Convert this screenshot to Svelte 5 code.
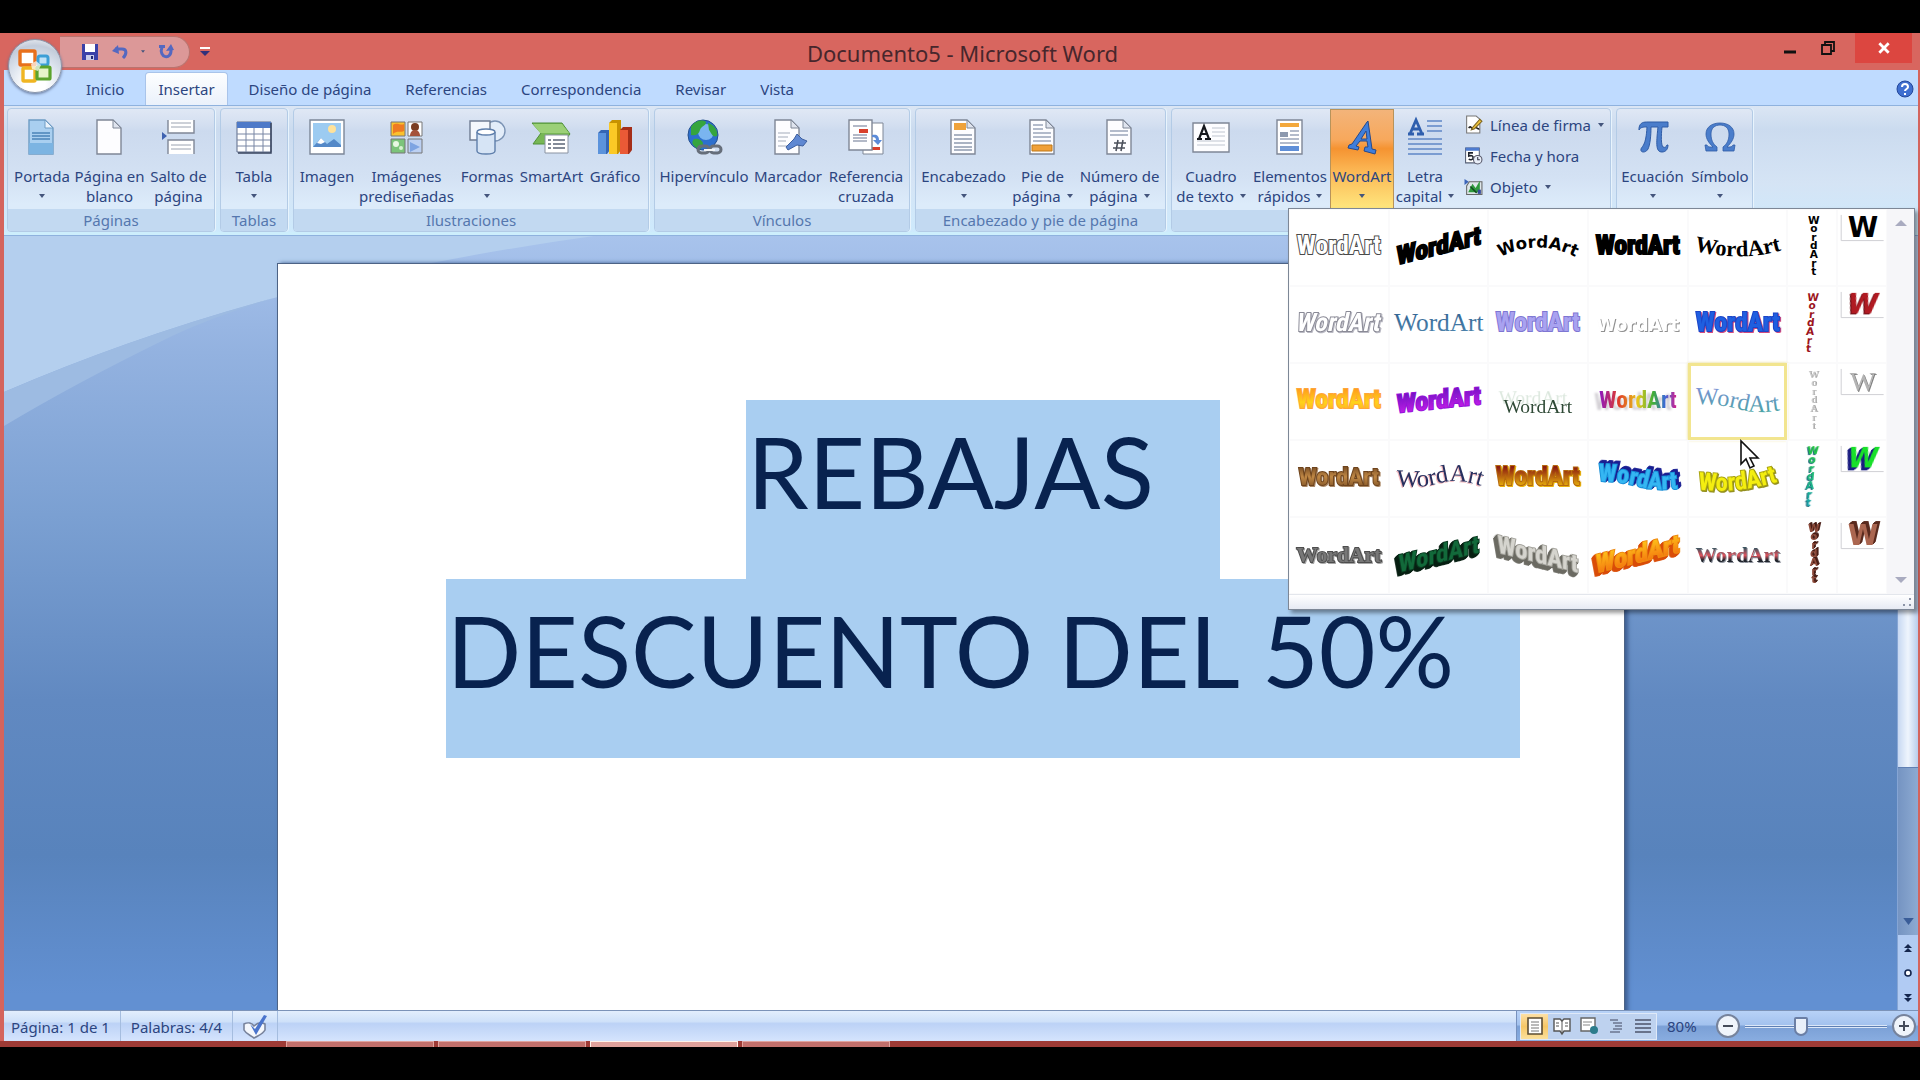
<script lang="ts">
  type Tool = { label: string[]; icon: string; w: number; menu?: boolean; active?: boolean };
  type Group = { name: string; tools: Tool[]; small?: { label: string; icon: string; menu?: boolean }[] };
  type Art = {
    font: 'impact' | 'wide' | 'serif' | 'serifbold';
    size: number;
    fill: string;
    stroke?: string;
    path?: string;
    transform?: string;
    filter?: string;
    y?: number;
  };

  const tabs = ['Inicio', 'Insertar', 'Diseño de página', 'Referencias', 'Correspondencia', 'Revisar', 'Vista'];
  let activeTab = $state('Insertar');
  let zoom = $state(38);
  let hovered = $state(14);

  const sheet = '<path d="M5 1h16l8 8v26H5z" fill="#fdfdff" stroke="#7f8796" stroke-width="1.4"/><path d="M21 1v8h8z" fill="#dfe4ee" stroke="#7f8796"/>';

  const icons: Record<string, string> = {
    portada: '<path d="M5 1h16l8 8v26H5z" fill="#a9cff0" stroke="#6e9cc4" stroke-width="1.4"/><path d="M21 1v8h8z" fill="#e9f3fc" stroke="#6e9cc4"/><path d="M8 14h18M8 17h18M8 20h18" stroke="#4a84b8" stroke-width="1.6"/><path d="M5 24h24v11H5z" fill="#7cb4e2"/>',
    blanco: sheet,
    salto: '<path d="M7 1h26v13H7zM7 21h26v14H7z" fill="#fff"/><path d="M7 1v13h26V1M7 35V21h26v14" fill="none" stroke="#7f8796" stroke-width="1.4"/><path d="M10 4h20M10 8h20M10 26h20M10 30h20" stroke="#9aa2b0"/><path d="M1 13l5 4-5 4z" fill="#3f62b0"/>',
    tabla: '<path d="M1 3h34v30H1z" fill="#fff" stroke="#5d6b88"/><path d="M1 3h34v6H1z" fill="#4e7ac8"/><path d="M1 15h34M1 21h34M1 27h34M10 9v24M18 9v24M27 9v24" stroke="#7886a4"/><path d="M35 4v30H2" fill="none" stroke="#39445e" stroke-width="1.5"/>',
    imagen: '<path d="M1 1h34v34H1z" fill="#fff" stroke="#7c8798" stroke-width="1.4"/><path d="M4 4h28v24H4z" fill="#9ccbf1"/><circle cx="23" cy="10" r="4" fill="#ffe29a"/><path d="M4 28l8-9 6 6 7-5 7 6v2z" fill="#5489c8"/><path d="M8 24l4-5 4 4-4 2z" fill="#fff"/>',
    clip: '<path d="M2 3h14v14H2z" fill="#fbc12d" stroke="#777"/><path d="M4 6c4-3 8 1 11-1v7c-4 2-7-1-11 3z" fill="#ef7a22"/><path d="M19 3h14v14H19z" fill="#fff" stroke="#777"/><circle cx="26" cy="8" r="4" fill="#7a3d22"/><path d="M21 17c0-8 10-8 10 0z" fill="#a5523a"/><path d="M2 20h14v14H2z" fill="#7cc47a" stroke="#777"/><circle cx="7" cy="25" r="3" fill="#e8f8e2"/><circle cx="12" cy="29" r="2" fill="#d7f2cf"/><path d="M19 20h14v14H19z" fill="#bcd0f2" stroke="#777"/><path d="M21 23l10 5-10 5z" fill="#7ea4e2"/>',
    formas: '<circle cx="26" cy="12" r="10" fill="#e3edf9" stroke="#7b93b4" stroke-width="1.4"/><path d="M1 2h20v19H1z" fill="#f4f7fc" stroke="#6f7c92" stroke-width="1.4"/><path d="M8 13v19c0 4 18 4 18 0V13" fill="#d6e4f5" stroke="#5f7fab" stroke-width="1.4"/><ellipse cx="17" cy="13" rx="9" ry="3" fill="#fff" stroke="#5f7fab" stroke-width="1.4"/>',
    smart: '<path d="M-2 4h30l8 11-8 10H-1l8-11z" fill="#77b755" stroke="#4f9038"/><path d="M-1 5h29l7 9H6z" fill="#9bd077"/><path d="M11 16h23v18H11z" fill="#fff" stroke="#8a93a2"/><path d="M14 21h3m2 0h12M14 25h3m2 0h12M14 29h3m2 0h12" stroke="#5b6677" stroke-width="1.6"/>',
    grafico: '<path d="M1 14l3-3h9v20l-3 4H1z" fill="#3566b4"/><path d="M1 14h8v21H1z" fill="#5b93dc"/><path d="M12 4l3-3h9v30l-3 4h-9z" fill="#c89200"/><path d="M12 4h8v31h-8z" fill="#fbc926"/><path d="M23 11l3-3h9v23l-3 4h-9z" fill="#a52e18"/><path d="M23 11h8v24h-8z" fill="#ea5a36"/>',
    hiper: '<circle cx="17" cy="16" r="15" fill="#2c6fce" stroke="#25508e"/><circle cx="20" cy="13" r="8" fill="#7ab5f0"/><path d="M5 8c5-8 13-7 15-5 0 4-5 4-6 8s-4 6-9 5zM22 4c7 2 10 8 9 13-5 2-6-4-8-6zM8 20c5-1 9 2 9 5s-2 5-4 5C8 28 4 24 8 20z" fill="#35a53e"/><rect x="12" y="27" width="11" height="7" rx="3.5" fill="none" stroke="#666e7a" stroke-width="3"/><rect x="24" y="27" width="11" height="7" rx="3.5" fill="none" stroke="#666e7a" stroke-width="3"/><path d="M18 31h11" stroke="#f2f4f7" stroke-width="2"/>',
    marcador: sheet + '<path d="M8 14h12M8 18h10M8 22h8M8 27h14" stroke="#a3abba"/><path d="M16 28l8-8 3-5 5 5 5 2-4 5-6-1-9 5z" fill="#5f88d2" stroke="#3d5f9f"/>',
    referencia: '<path d="M15 4h20v31H15z" fill="#fff" stroke="#7f8796"/><path d="M20 28h12v3H20z" fill="#d8402c"/><path d="M1 1h23v30H1z" fill="#fff" stroke="#7f8796" stroke-width="1.4"/><path d="M5 7h14M5 16h14M5 19h14M5 22h14" stroke="#9aa3b5" stroke-width="1.5"/><path d="M11 10h9v4h-9z" fill="#d8402c"/><path d="M24 16c5-1 7 1 7 5h3l-4 5-5-5h3c0-2-1-3-4-3z" fill="#5b8bd8"/>',
    encabezado: sheet + '<path d="M8 4h12v7H8z" fill="#efa23a"/><path d="M8 16h18M8 20h18M8 24h18M8 28h18M8 31h18" stroke="#8f9ab0" stroke-width="1.4"/>',
    pie: sheet + '<path d="M8 6h10M8 10h10M8 14h18M8 18h18M8 22h18" stroke="#9aa5ba" stroke-width="1.4"/><path d="M7 26h20v6H7z" fill="#f0a038" stroke="#bf7918"/>',
    numero: sheet + '<path d="M8 12h18M8 16h18" stroke="#9aa5ba" stroke-width="1.4"/><path d="M16 21l-2 11M21 21l-2 11M12 24h12M11 29h12" stroke="#4c515c" stroke-width="1.6"/>',
    cuadro: '<path d="M0 4h36v29H0z" fill="#fdfdff" stroke="#7f8796" stroke-width="1.4"/><path d="M19 9h13M19 13h13M19 17h13M4 22h28M4 26h28" stroke="#bfc5d0"/><path d="M4 20h5M12 20h6M6 20l5-13 5 13M8 15h6" fill="none" stroke="#16181d" stroke-width="2.2"/>',
    elementos: '<path d="M5 1h25v34H5z" fill="#fff" stroke="#7f8796" stroke-width="1.4"/><path d="M8 4h19v4H8z" fill="#f3a83c"/><path d="M18 12h9M18 16h9M8 20h19M8 24h19" stroke="#9aa5ba" stroke-width="1.4"/><path d="M8 13h8v5H8z" fill="#8d99ae"/><path d="M8 27h19v5H8z" fill="#5f8fd8"/>',
    wordart: '<path d="M24 2l4 28 4 1-1 4-11-3 1-4 3 0-1-6-7 0-4 5 3 1-1 3-10-2 1-3 3-1L23 3zM22 12l-5 8h6z" fill="#3f7edb" stroke="#27498a" fill-rule="evenodd"/>',
    letra: '<path d="M1 15h6M10 15h7M3 15L9 1l6 14M5 10h8" fill="none" stroke="#2f5fae" stroke-width="2.8"/><path d="M20 2h15M20 7h15M20 12h15M1 20h34M1 25h34M1 30h34M1 35h34" stroke="#5f86c6" stroke-width="1.5"/>',
    ecuacion: '<path d="M4 9c1-6 5-6 9-6h20v5h-6c-1 9-1 18 1 20 2 1 3 0 4-2h1c0 5-3 7-6 7-6 0-6-7-4-25h-7c0 9-1 18-3 22-2 4-8 4-7 0 1-3 5-3 6-22-4 0-6 0-8 3z" fill="#4a7dcb" stroke="#2f5ca6"/>',
    simbolo: '<path d="M4 32l-1-6h2c1 2 2 2 6 2C7 24 4 20 4 15 4 8 10 4 18 4s14 4 14 11c0 5-3 9-7 13 4 0 5 0 6-2h2l-1 6H21v-4c4-3 6-7 6-13 0-6-4-9-9-9s-9 3-9 9c0 6 2 10 6 13v4z" fill="#4a7dcb" stroke="#2f5ca6" stroke-width=".8"/>',
    firma: '<path d="M5 2h18l7 6v26H5z" fill="#fff" stroke="#777" stroke-width="2"/><path d="M9 25c4-8 6 6 10-1 3-5 5 4 10 2" fill="none" stroke="#222" stroke-width="3"/><path d="M16 24L30 8l4 4-14 14-6 2z" fill="#f0c23a" stroke="#7d6520" stroke-width="2"/>',
    fecha: '<path d="M3 4h26v28H3z" fill="#fff" stroke="#555f75" stroke-width="2"/><path d="M3 3h26v6H3z" fill="#4d7bd0"/><path d="M17 13h-8v6c6-2 9 0 8 4-1 3-5 4-8 2" fill="none" stroke="#1d222c" stroke-width="3"/><circle cx="26" cy="26" r="8" fill="#e8eef8" stroke="#556" stroke-width="2"/><path d="M26 21v5h4" fill="none" stroke="#334" stroke-width="2"/>',
    objeto: '<path d="M1 4l8 5-8 6z" fill="#3c64b8"/><path d="M10 9h24v24H5V17z" fill="#dfe7ea" stroke="#666" stroke-width="2"/><path d="M8 29l8-16 6 8 8-14v22z" fill="#2f9a3d"/><path d="M26 24h6v8h-6z" fill="#374a9c"/><path d="M12 18l12 12" stroke="#124f1f" stroke-width="3"/>',
  };

  const groups: Group[] = [
    { name: 'Páginas', tools: [
      { label: ['Portada'], icon: 'portada', w: 68, menu: true },
      { label: ['Página en', 'blanco'], icon: 'blanco', w: 67 },
      { label: ['Salto de', 'página'], icon: 'salto', w: 71 },
    ] },
    { name: 'Tablas', tools: [{ label: ['Tabla'], icon: 'tabla', w: 66, menu: true }] },
    { name: 'Ilustraciones', tools: [
      { label: ['Imagen'], icon: 'imagen', w: 66 },
      { label: ['Imágenes', 'prediseñadas'], icon: 'clip', w: 93 },
      { label: ['Formas'], icon: 'formas', w: 68, menu: true },
      { label: ['SmartArt'], icon: 'smart', w: 61 },
      { label: ['Gráfico'], icon: 'grafico', w: 66 },
    ] },
    { name: 'Vínculos', tools: [
      { label: ['Hipervínculo'], icon: 'hiper', w: 98 },
      { label: ['Marcador'], icon: 'marcador', w: 70 },
      { label: ['Referencia', 'cruzada'], icon: 'referencia', w: 86 },
    ] },
    { name: 'Encabezado y pie de página', tools: [
      { label: ['Encabezado'], icon: 'encabezado', w: 95, menu: true },
      { label: ['Pie de', 'página'], icon: 'pie', w: 63, menu: true },
      { label: ['Número de', 'página'], icon: 'numero', w: 91, menu: true },
    ] },
    { name: 'Texto', tools: [
      { label: ['Cuadro', 'de texto'], icon: 'cuadro', w: 78, menu: true },
      { label: ['Elementos', 'rápidos'], icon: 'elementos', w: 80, menu: true },
      { label: ['WordArt'], icon: 'wordart', w: 64, menu: true, active: true },
      { label: ['Letra', 'capital'], icon: 'letra', w: 62, menu: true },
    ], small: [
      { label: 'Línea de firma', icon: 'firma', menu: true },
      { label: 'Fecha y hora', icon: 'fecha' },
      { label: 'Objeto', icon: 'objeto', menu: true },
    ] },
    { name: 'Símbolos', tools: [
      { label: ['Ecuación'], icon: 'ecuacion', w: 71, menu: true },
      { label: ['Símbolo'], icon: 'simbolo', w: 64, menu: true },
    ] },
  ];

  function shade(x: number, y: number, color: string, times = 1) {
    return Array(times).fill(`drop-shadow(${x}px ${y}px 0 ${color})`).join(' ');
  }

  const up = 'translate(50 38) skewY(-14) translate(-50 -38)';
  const slant = 'translate(50 38) skewX(-12) translate(-50 -38)';

  const arts: Art[] = [
    { font: 'impact', size: 26, fill: '#fff', stroke: '#4a4a4a' },
    { font: 'impact', size: 26, fill: '#000', stroke: '#000', transform: up },
    { font: 'wide', size: 17, fill: '#000', path: 'arch' },
    { font: 'impact', size: 26, fill: '#000', stroke: '#000' },
    { font: 'serifbold', size: 23, fill: '#000', path: 'sag' },
    { font: 'impact', size: 26, fill: '#fff', stroke: '#8a8a96', transform: slant, filter: shade(1, 1, '#b8b8c2') },
    { font: 'serif', size: 26, fill: 'url(#g-steel)' },
    { font: 'impact', size: 26, fill: '#a9a2f0', stroke: '#7e76d2' },
    { font: 'wide', size: 18, fill: '#fff', filter: shade(1, 1, '#8d8d8d') },
    { font: 'impact', size: 26, fill: '#1f5fe0', stroke: '#1b45c8', filter: shade(1, 1, '#d0467c') },
    { font: 'impact', size: 26, fill: 'url(#g-gold)', stroke: '#ffa53a' },
    { font: 'impact', size: 26, fill: 'url(#g-purple)', stroke: '#9412d8', transform: 'translate(50 38) skewY(-6) translate(-50 -38)' },
    { font: 'serif', size: 20, fill: '#2f4a36', filter: 'drop-shadow(-5px -9px 0 #dbe7dd)', y: 50 },
    { font: 'impact', size: 24, fill: 'url(#g-rainbow)', filter: 'drop-shadow(-5px 2px 1px #d2cfd4)' },
    { font: 'serif', size: 26, fill: 'url(#g-sky)', path: 'wave' },
    { font: 'impact', size: 25, fill: 'url(#g-wood)', stroke: '#6d431c', filter: shade(1, 1, '#a98562') },
    { font: 'serif', size: 25, fill: '#27305f', path: 'bump', filter: shade(-1, 1, '#f3b4b8') },
    { font: 'impact', size: 26, fill: 'url(#g-fire)', stroke: '#b5680e', filter: shade(1, 1, '#e8b10a') },
    { font: 'impact', size: 25, fill: '#35b6f2', stroke: '#1890d8', path: 'wave', filter: shade(1, -1, '#1a1f92', 3) },
    { font: 'impact', size: 25, fill: '#f4ee10', stroke: '#a9a412', path: 'rise', filter: shade(1, 1, '#8f8b1c') },
    { font: 'serifbold', size: 22, fill: '#777', stroke: '#4d4d4d', filter: shade(1, 1, '#a5a5a5') },
    { font: 'impact', size: 25, fill: '#12693a', stroke: '#0a3a20', transform: up, filter: shade(-1, 1, '#071f12', 4) },
    { font: 'impact', size: 25, fill: '#d5d4ce', stroke: '#a3a29b', transform: 'translate(50 38) skewY(14) translate(-50 -38)', filter: shade(-1, 1, '#6b6a62', 4) },
    { font: 'impact', size: 26, fill: 'url(#g-orange)', stroke: '#ef8d10', transform: up, filter: shade(-1, 1, '#d94d08', 4) },
    { font: 'serifbold', size: 22, fill: 'url(#g-stripe)', filter: shade(1, 1, '#8a8f99') },
  ];

  const columns = [
    { font: 'wide', fill: '#000', slant: 0, filter: 'none' },
    { font: 'wide', fill: '#9c1420', slant: -10, filter: 'none' },
    { font: 'serif', fill: '#c4c4c4', slant: 0, filter: shade(1, 0, '#9b9b9b') },
    { font: 'wide', fill: 'url(#g-green)', slant: -10, filter: shade(-1, 1, '#1d6a78') },
    { font: 'wide', fill: '#8c4a3a', slant: 0, filter: shade(1, -1, '#471c14', 2) },
  ];

  const letters = [
    { font: 'wide', fill: '#000', slant: 0, filter: 'none' },
    { font: 'wide', fill: '#b01a22', slant: -12, filter: shade(-1, 1, '#6a0d15') },
    { font: 'serif', fill: '#b4b4b4', slant: 0, filter: shade(1, 1, '#808080') },
    { font: 'wide', fill: '#18e02a', slant: -12, filter: shade(-1, 1, '#1a1c80', 3) },
    { font: 'wide', fill: '#ab6650', slant: 0, filter: shade(1, -1, '#5a2a1e', 3) },
  ];
</script>

{#snippet caret()}
  <svg class="caret" viewBox="0 0 6 4" aria-hidden="true"><path d="M0 0h6L3 4z" /></svg>
{/snippet}

<svg class="defs" aria-hidden="true">
  <defs>
    <path id="p-arch" d="M4 52Q50 24 96 52" />
    <path id="p-sag" d="M2 40Q50 54 98 40" />
    <path id="p-wave" d="M2 41Q28 40 50 46T98 47" />
    <path id="p-bump" d="M2 45Q30 49 50 43T98 47" />
    <path id="p-rise" d="M2 48Q46 56 98 39" />
    <linearGradient id="g-steel" x2="0" y2="1"><stop stop-color="#2f5f8e" /><stop offset="1" stop-color="#4f88b0" /></linearGradient>
    <linearGradient id="g-gold" x2="0" y2="1"><stop stop-color="#ff8a1e" /><stop offset=".6" stop-color="#ffd21a" /><stop offset="1" stop-color="#ffa230" /></linearGradient>
    <linearGradient id="g-purple" x2="0" y2="1"><stop stop-color="#5a12b8" /><stop offset="1" stop-color="#d41ef0" /></linearGradient>
    <linearGradient id="g-rainbow"><stop stop-color="#8b18c2" /><stop offset=".25" stop-color="#e03a2a" /><stop offset=".5" stop-color="#e8c81a" /><stop offset=".7" stop-color="#3fae3a" /><stop offset=".85" stop-color="#3b68d8" /><stop offset="1" stop-color="#d81e8a" /></linearGradient>
    <linearGradient id="g-sky" x2="0" y2="1"><stop stop-color="#8a8fe0" /><stop offset="1" stop-color="#3fa59c" /></linearGradient>
    <linearGradient id="g-wood" x2="0" y2="1"><stop stop-color="#5c3516" /><stop offset=".5" stop-color="#c08845" /><stop offset="1" stop-color="#6d431c" /></linearGradient>
    <linearGradient id="g-fire" x2="0" y2="1"><stop offset=".2" stop-color="#8c1c10" /><stop offset=".9" stop-color="#f2c20c" /></linearGradient>
    <linearGradient id="g-orange" x2="0" y2="1"><stop stop-color="#ffd21c" /><stop offset="1" stop-color="#f4660c" /></linearGradient>
    <linearGradient id="g-stripe" x2="0" y2="1"><stop offset=".2" stop-color="#3c5560" /><stop offset=".5" stop-color="#e0525c" /><stop offset=".7" stop-color="#20242c" /></linearGradient>
    <linearGradient id="g-green" x2="0" y2="1"><stop stop-color="#22c83a" /><stop offset="1" stop-color="#18a8b8" /></linearGradient>
  </defs>
</svg>

<div class="screen">
  <div class="window">
    <header class="titlebar">
      <div class="qat">
        <button type="button" aria-label="Guardar">
          <svg viewBox="0 0 16 16"><path d="M0 0h16v16H0z" fill="#3b41a8" /><path d="M3 0h10v8H3z" fill="#fff" /><path d="M4 11h8v5H4z" fill="#c9cdea" /><path d="M9 12h2v3H9z" fill="#232773" /></svg>
        </button>
        <button type="button" aria-label="Deshacer">
          <svg viewBox="0 0 16 16"><path d="M3 5h7c5 0 5 5 1 9" fill="none" stroke="#5468c0" stroke-width="3" /><path d="M0 7l6-6 1 9z" fill="#5468c0" /></svg>
        </button>
        {@render caret()}
        <button type="button" aria-label="Rehacer">
          <svg viewBox="0 0 16 16"><path d="M4 3c-4 11 10 14 9 2" fill="none" stroke="#5468c0" stroke-width="3" /><path d="M8 7l8-1-3-6zM1 1h6v3H1z" fill="#5468c0" /></svg>
        </button>
      </div>
      <button type="button" class="qat-more" aria-label="Personalizar barra">
        <svg viewBox="0 0 10 10"><path d="M0 1h10" stroke="#fff" stroke-width="2" /><path d="M0 4h10L5 9z" fill="#33307a" /></svg>
      </button>
      <h1>Documento5 - Microsoft Word</h1>
      <div class="controls">
        <button type="button" aria-label="Minimizar"><svg viewBox="0 0 14 14"><path d="M1 11h12" stroke="#111" stroke-width="3" /></svg></button>
        <button type="button" aria-label="Restaurar"><svg viewBox="0 0 14 14"><path d="M4 4V1h9v9h-3M1 4h9v9H1z" fill="none" stroke="#111" stroke-width="1.8" /></svg></button>
        <button type="button" class="close" aria-label="Cerrar"><svg viewBox="0 0 12 12"><path d="M2 2l8 8M10 2l-8 8" stroke="#fff" stroke-width="2.4" /></svg></button>
      </div>
      <button type="button" class="office" aria-label="Botón de Office">
        <svg viewBox="0 0 36 36">
          <rect x="3" y="3" width="15" height="14" rx="1" fill="#fff" stroke="#e8701c" stroke-width="3.4" />
          <rect x="21" y="8" width="10" height="9" rx="2" fill="#bfe2f7" stroke="#3c9fd6" stroke-width="3" />
          <rect x="6" y="20" width="12" height="13" rx="1" fill="#fff" stroke="#f0b522" stroke-width="3.4" />
          <rect x="20" y="19" width="13" height="12" rx="1" fill="#e6f4c9" stroke="#5ba32c" stroke-width="3.2" />
          <path d="M14 16l5-3 5 4-3 6-6-2z" fill="#fff" opacity=".7" />
        </svg>
      </button>
    </header>

    <nav class="tabs">
      {#each tabs as tab}
        <button type="button" class:active={tab === activeTab} onclick={() => (activeTab = tab)}>{tab}</button>
      {/each}
      <button type="button" class="help" aria-label="Ayuda">
        <svg viewBox="0 0 18 18"><circle cx="9" cy="9" r="8" fill="#3f6fd0" stroke="#24479a" /><path d="M6 7c0-4 6-4 6 0 0 2-3 2-3 4M9 13v2" fill="none" stroke="#fff" stroke-width="2" /></svg>
      </button>
    </nav>

    <div class="ribbon">
      {#each groups as group}
        <section class="group" aria-label={group.name}>
          <div class="tools">
            {#each group.tools as tool}
              <button type="button" class="tool" class:pressed={tool.active} style:width="{tool.w}px">
                <svg viewBox="0 0 36 36" aria-hidden="true">{@html icons[tool.icon]}</svg>
                <span>{tool.label[0]}</span>
                <span class="second">{tool.label[1] ?? ''}{#if tool.menu}{@render caret()}{/if}</span>
              </button>
            {/each}
            {#if group.small}
              <div class="stack">
                {#each group.small as item}
                  <button type="button">
                    <svg viewBox="0 0 36 36" aria-hidden="true">{@html icons[item.icon]}</svg>
                    {item.label}{#if item.menu}{@render caret()}{/if}
                  </button>
                {/each}
              </div>
            {/if}
          </div>
          <div class="group-name">{group.name === 'Texto' || group.name === 'Símbolos' ? '' : group.name}</div>
        </section>
      {/each}
    </div>

    <main class="workspace">
      <div class="canvas">
        <svg class="swoosh" viewBox="0 0 1893 200" preserveAspectRatio="none" aria-hidden="true">
          <path d="M0 0H590Q430 22 270 62Q130 100 0 156z" fill="#b4cfee" />
          <path d="M0 156Q130 100 270 62Q200 84 160 104Q70 148 0 190z" fill="#9dbbe2" />
        </svg>
        <article class="page">
          <p><span>REBAJAS</span></p>
          <p><span>DESCUENTO DEL 50%</span></p>
        </article>
      </div>
      <div class="scroll">
        <div class="thumb"></div>
        <div class="track">{@render caret()}</div>
        <button type="button" aria-label="Página anterior"><svg viewBox="0 0 8 8"><path d="M4 0l4 4H0zM4 4l4 4H0z" fill="#14264e" /></svg></button>
        <button type="button" aria-label="Seleccionar objeto"><svg viewBox="0 0 8 8"><circle cx="4" cy="4" r="3" fill="#fff" stroke="#14264e" stroke-width="1.6" /></svg></button>
        <button type="button" aria-label="Página siguiente"><svg viewBox="0 0 8 8"><path d="M4 4L0 0h8zM4 8L0 4h8z" fill="#14264e" /></svg></button>
      </div>
    </main>

    <footer class="status">
      <span class="cell">Página: 1 de 1</span>
      <span class="cell">Palabras: 4/4</span>
      <span class="cell proof">
        <svg viewBox="0 0 24 24"><path d="M1 9c4-2 8-1 10 2 3-3 7-4 11-2v6c-2 4-6 5-11 8-4-3-8-4-10-8z" fill="#f4f7fc" stroke="#77829b" stroke-width="1.6" /><path d="M7 9l5 5L21 0l3 1-11 19z" fill="#4a74cc" /></svg>
      </span>
      <div class="tray">
        <div class="views">
          <button type="button" class="on" aria-label="Diseño de impresión"><svg viewBox="0 0 18 18"><path d="M2 1h14v16H2z" fill="#fff" stroke="#5c4d33" stroke-width="1.6" /><path d="M5 5h8M5 8h8M5 11h8M5 14h8" stroke="#777" /></svg></button>
          <button type="button" aria-label="Lectura"><svg viewBox="0 0 18 18"><path d="M1 2h6l2 2 2-2h6v12h-6l-2 3-2-3H1z" fill="#fff" stroke="#555" stroke-width="1.4" /><path d="M9 4v12M3 6h3M3 9h3M12 6h3M12 9h3" stroke="#555" /></svg></button>
          <button type="button" aria-label="Diseño web"><svg viewBox="0 0 18 18"><path d="M1 1h14v13H1z" fill="#fff" stroke="#666" stroke-width="1.4" /><path d="M3 5h9M3 8h7" stroke="#888" /><circle cx="14" cy="13" r="4" fill="#2c7c8c" /></svg></button>
          <button type="button" aria-label="Esquema"><svg viewBox="0 0 18 18"><path d="M3 3h8M6 6h9M8 9h7M6 12h9M3 15h10" stroke="#6b7690" stroke-width="1.4" /></svg></button>
          <button type="button" aria-label="Borrador"><svg viewBox="0 0 18 18"><path d="M1 3h16M1 7h16M1 11h16M1 15h16" stroke="#69738b" stroke-width="2" /></svg></button>
        </div>
        <span class="percent">80%</span>
        <button type="button" class="round" aria-label="Alejar"><svg viewBox="0 0 12 12"><path d="M1 6h10" stroke="#444b5a" stroke-width="2" /></svg></button>
        <input type="range" min="0" max="100" bind:value={zoom} aria-label="Zoom" />
        <button type="button" class="round" aria-label="Acercar"><svg viewBox="0 0 12 12"><path d="M1 6h10M6 1v10" stroke="#444b5a" stroke-width="2" /></svg></button>
      </div>
    </footer>

    <div class="taskbar"><i></i><i></i><i class="front"></i><i></i></div>

    <div class="gallery">
      <div class="gallery-body">
        <div class="grid">
          {#each arts as art, i}
            <button type="button" class="art" class:hover={i === hovered} onmouseenter={() => (hovered = i)}>
              <svg viewBox="0 0 100 76">
                <g style:filter={art.filter ?? 'none'}>
                  <text class={art.font} x={art.path ? undefined : 50} y={art.path ? undefined : (art.y ?? 45)} font-size={art.size} fill={art.fill} stroke={art.stroke ?? 'none'} transform={art.transform}>
                    {#if art.path}
                      <textPath href="#p-{art.path}" startOffset="50%">WordArt</textPath>
                    {:else}WordArt{/if}
                  </text>
                </g>
              </svg>
            </button>
            {#if i % 5 === 4}
              {@const col = columns[(i - 4) / 5]}
              {@const one = letters[(i - 4) / 5]}
              <button type="button" class="art">
                <svg viewBox="0 0 50 76">
                  <text class={col.font} font-size="11" fill={col.fill} style:filter={col.filter} transform="translate(27 0) skewX({col.slant / 2})">{#each 'WordArt' as ch, n}<tspan x="0" y={13 + n * 9}>{ch}</tspan>{/each}</text>
                </svg>
              </button>
              <button type="button" class="art">
                <svg viewBox="0 0 48 76">
                  <path d="M3 5v26h43" fill="none" stroke="#cfcfd4" />
                  <text class={one.font} x="25" y="27" font-size="28" fill={one.fill} style:filter={one.filter} transform="translate(25 18) skewX({one.slant}) translate(-25 -18)">W</text>
                </svg>
              </button>
            {/if}
          {/each}
        </div>
        <div class="gallery-scroll">
          <svg viewBox="0 0 12 6"><path d="M6 0l6 6H0z" /></svg>
          <svg viewBox="0 0 12 6"><path d="M0 0h12L6 6z" /></svg>
        </div>
      </div>
      <div class="gallery-foot">
        <svg viewBox="0 0 10 10"><path d="M7 1h2v2H7zM7 7h2v2H7zM1 7h2v2H1z" fill="#8b93a6" /></svg>
      </div>
    </div>

    <svg class="pointer" viewBox="0 0 20 30" aria-hidden="true"><path d="M1 1v23l5-5 4 9 4-2-4-8h8z" fill="#fff" stroke="#111" stroke-width="1.6" /></svg>
  </div>
</div>

<style>
  :global(body) {
    margin: 0;
    background: #000;
  }

  .screen {
    box-sizing: border-box;
    min-height: 100vh;
    padding: 33px 0;
    display: flex;
    background: #000;
    font-family: 'Noto Sans', 'Open Sans', sans-serif;
    font-size: 15px;
    line-height: 20px;
    color: #2c4580;
  }

  .window {
    position: relative;
    flex: 1;
    min-width: 0;
    display: flex;
    flex-direction: column;
    background: #d4645d;
    overflow: hidden;
  }

  button {
    font: inherit;
    color: inherit;
    padding: 0;
    border: 0;
    background: none;
  }

  svg { display: block; overflow: visible; }
  .defs { position: absolute; width: 0; height: 0; }
  .caret { display: inline-block; width: 6px; height: 4px; fill: #44557c; }

  /* title bar */
  .titlebar {
    position: relative;
    height: 37px;
    display: flex;
    align-items: center;
    background: #d8665f;
  }
  .qat {
    box-sizing: border-box;
    width: 130px;
    height: 32px;
    margin-left: 60px;
    padding-left: 22px;
    display: flex;
    align-items: center;
    gap: 14px;
    border: 1px solid #b9746f;
    border-left: 0;
    border-radius: 0 16px 16px 0;
    background: #dc9898;
  }
  .qat svg { width: 16px; height: 16px; }
  .qat .caret { width: 4px; height: 3px; margin: 0 -1px; }
  .qat-more { margin-left: 10px; }
  .qat-more svg { width: 10px; height: 10px; }
  h1 {
    flex: 1;
    margin: 0;
    padding: 2px 56px 0 0;
    font-size: 22px;
    font-weight: 400;
    line-height: 28px;
    text-align: center;
    color: #47262c;
  }
  .controls { display: flex; align-self: flex-start; margin-right: 8px; height: 30px; }
  .controls button { width: 38px; display: grid; place-items: center; }
  .controls svg { width: 14px; height: 14px; }
  .controls .close { width: 57px; margin-left: 8px; background: #dc4640; }
  .office {
    position: absolute;
    left: 8px;
    top: 6px;
    z-index: 2;
    width: 54px;
    height: 54px;
    border: 1px solid #8b96aa;
    border-radius: 50%;
    display: grid;
    place-items: center;
    background: radial-gradient(circle at 50% 85%, #fff 20%, #dde4ee 50%, #c3ccda 75%, #fff);
    box-shadow: 0 1px 3px #5e6f93;
  }
  .office svg { width: 36px; height: 36px; }

  /* tabs */
  .tabs {
    height: 35px;
    margin: 0 2px 0 4px;
    padding-left: 69px;
    display: flex;
    align-items: flex-end;
    gap: 8px;
    background: #bfdbff;
  }
  .tabs button {
    height: 33px;
    padding: 0 12px;
    border: 1px solid transparent;
    border-bottom: 0;
    border-radius: 4px 4px 0 0;
  }
  .tabs .active { background: linear-gradient(#fdfeff, #eaf1fb); border-color: #a9c4ea; }
  .tabs .help { margin-left: auto; padding: 0 3px 0 0; }
  .help svg { width: 18px; height: 18px; }

  /* ribbon */
  .ribbon {
    box-sizing: border-box;
    height: 131px;
    margin: 0 2px 0 4px;
    padding: 2px 3px 3px;
    display: flex;
    gap: 5px;
    border: solid #8fb2de;
    border-width: 1px 0;
    background: linear-gradient(#dbe6f4, #cbdbef 18%, #d5e4f5 60%, #cdeafd);
    box-shadow: inset 0 -3px #cdeefc;
  }
  .group {
    display: flex;
    flex-direction: column;
    border: 1px solid #b3cbe6;
    border-radius: 4px;
    background: linear-gradient(#e0e8f5, #d2def0 14%, #ccdaee 18%, #d3e1f3 55%, #dcebfa 78%);
    box-shadow: 1px 0 #e8f4fd;
  }
  .tools { display: flex; height: 101px; }
  .tool {
    box-sizing: border-box;
    display: flex;
    flex-direction: column;
    align-items: center;
    padding-top: 10px;
    white-space: nowrap;
  }
  .tool > svg { width: 36px; height: 36px; margin-bottom: 11px; }
  .tool span { line-height: 20px; height: 20px; }
  .tool .second { display: flex; align-items: center; gap: 6px; }
  .pressed {
    border: 1px solid #b8935a;
    padding-top: 9px;
    background: linear-gradient(#f3b47a, #f7a85c 30%, #f59331 39%, #fbb552 60%, #ffe77e);
  }
  .stack { box-sizing: border-box; width: 154px; padding-left: 8px; }
  .stack button { display: flex; align-items: center; gap: 7px; height: 31px; white-space: nowrap; }
  .stack svg:not(.caret) { width: 19px; height: 19px; }
  .group-name {
    flex: 1;
    line-height: 22px;
    text-align: center;
    color: #5577ae;
    background: #c2d9f1;
    border-radius: 0 0 3px 3px;
  }

  /* document area */
  .workspace { flex: 1; min-height: 0; display: flex; margin: 0 2px 0 4px; }
  .canvas {
    position: relative;
    flex: 1;
    min-width: 0;
    overflow: hidden;
    background: linear-gradient(#a8c3ec, #93b2e0 15%, #7ba0d2 36%, #6189c1 60%, #5883bc 80%, #6290d2 98%);
  }
  .swoosh { position: absolute; left: 0; top: 0; width: 100%; height: 200px; }
  .page {
    position: relative;
    box-sizing: border-box;
    width: 1348px;
    max-width: 100%;
    height: 100%;
    margin: 27px auto 0;
    padding: 136px 0 0 65px;
    border: 1px solid #4d6385;
    background: #fff;
    box-shadow: 3px 0 4px #3e5f92;
    font-family: Lato, sans-serif;
    font-size: 98px;
    line-height: 143px;
    color: #08224f;
  }
  .page p { margin: 0; display: flex; justify-content: center; }
  .page span { padding: 0 66px 36px 1px; background: #a9cef1; }

  .scroll {
    width: 20px;
    display: flex;
    flex-direction: column;
    background: #b1cbf3;
    border-left: 1px solid #86a5d4;
  }
  .thumb { height: 531px; border-bottom: 1px solid #6080b4; background: linear-gradient(90deg, #c7d8f2, #eff5fd 50%, #b9cceb); }
  .track { flex: 1; display: flex; align-items: flex-end; justify-content: center; padding-bottom: 10px; background: linear-gradient(90deg, #7594c2, #8daad2); }
  .track .caret { width: 11px; height: 7px; fill: #3a5d98; }
  .scroll button { height: 25px; display: grid; place-items: center; }
  .scroll button svg { width: 8px; height: 8px; }

  /* status bar */
  .status {
    box-sizing: border-box;
    height: 31px;
    margin: 0 2px 0 4px;
    display: flex;
    align-items: stretch;
    border-top: 1px solid #7c93b8;
    background: linear-gradient(#e3eefd, #cfe1f9 35%, #bcd2f6 42%, #d5e4fd);
  }
  .cell { display: flex; align-items: center; padding: 1px 10px 0 10px; border-right: 1px solid #a5bddf; }
  .cell:first-child { padding-left: 7px; }
  .proof svg { width: 24px; height: 24px; }
  .tray {
    width: 401px;
    margin-left: auto;
    display: flex;
    align-items: center;
    border-left: 1px solid #7791bd;
    background: linear-gradient(#b8d2f7, #a3c2ee 45%, #7ba0d6 52%, #89ade0);
  }
  .views { display: flex; margin-left: 3px; border: 1px solid #dfe9f8; background: #bed2ef; }
  .views button { width: 27px; height: 25px; display: grid; place-items: center; }
  .views .on { background: linear-gradient(#fce0a6, #f7c766 50%, #fbe09c); }
  .views svg { width: 18px; height: 18px; }
  .percent { margin: 0 auto 0 10px; }
  .round {
    width: 24px;
    height: 24px;
    border: 2px solid #76839c;
    border-radius: 50%;
    display: grid;
    place-items: center;
    background: #eff4fb;
  }
  .round svg { width: 12px; height: 12px; }
  .round:last-child { margin-right: 2px; }
  input {
    appearance: none;
    width: 142px;
    height: 20px;
    margin: 0 5px;
    background: linear-gradient(#5d7fb4, #5d7fb4) center / 100% 1px no-repeat, linear-gradient(#dbe7f8, #dbe7f8) center / 100% 3px no-repeat;
  }
  input::-webkit-slider-thumb {
    appearance: none;
    width: 14px;
    height: 19px;
    border: 2px solid #6b7fa5;
    border-radius: 2px 2px 7px 7px;
    background: #e9f0fa;
  }

  .taskbar { height: 6px; padding-left: 286px; display: flex; gap: 4px; background: #9e3b36; }
  .taskbar i { width: 146px; border: solid #e0a5a0; border-width: 1px 1px 0; background: #c2706c; }
  .taskbar .front { border-color: #fff3ea; background: #e0a29c; }

  /* WordArt gallery */
  .gallery {
    position: absolute;
    top: 175px;
    right: 5px;
    width: 625px;
    border: 1px solid #7d8796;
    background: #fff;
    box-shadow: 3px 3px 4px #0006;
  }
  .gallery-body { display: flex; }
  .grid {
    flex: 1;
    display: grid;
    grid-template-columns: repeat(5, 2fr) 1fr 1fr;
    grid-auto-rows: 77px;
  }
  .art { box-sizing: border-box; border: 1px solid #fafafb; }
  .art svg { width: 100%; height: 100%; }
  .art.hover { border: 3px solid #f2e58f; box-shadow: 0 0 3px #e9dd8c; }
  .art text { text-anchor: middle; stroke-width: 2px; paint-order: stroke; }
  .impact { font-family: 'Liberation Sans Narrow', 'Roboto Condensed', 'Liberation Sans', sans-serif; font-weight: 700; }
  .wide { font-family: 'DejaVu Sans', sans-serif; font-weight: 700; }
  .serif { font-family: 'Liberation Serif', serif; }
  .serifbold { font-family: 'Liberation Serif', serif; font-weight: 700; }
  .gallery-scroll {
    width: 27px;
    padding: 11px 0;
    box-sizing: border-box;
    display: flex;
    flex-direction: column;
    align-items: center;
    justify-content: space-between;
    background: #f6f6f9;
  }
  .gallery-scroll svg { width: 12px; height: 6px; fill: #a9abc0; }
  .gallery-foot {
    height: 14px;
    display: flex;
    justify-content: flex-end;
    align-items: center;
    padding-right: 2px;
    border-top: 1px solid #e3e6ec;
    background: linear-gradient(#fff, #e6eaf3);
  }
  .gallery-foot svg { width: 10px; height: 10px; }

  .pointer { position: absolute; right: 160px; top: 407px; width: 20px; height: 30px; }
</style>
